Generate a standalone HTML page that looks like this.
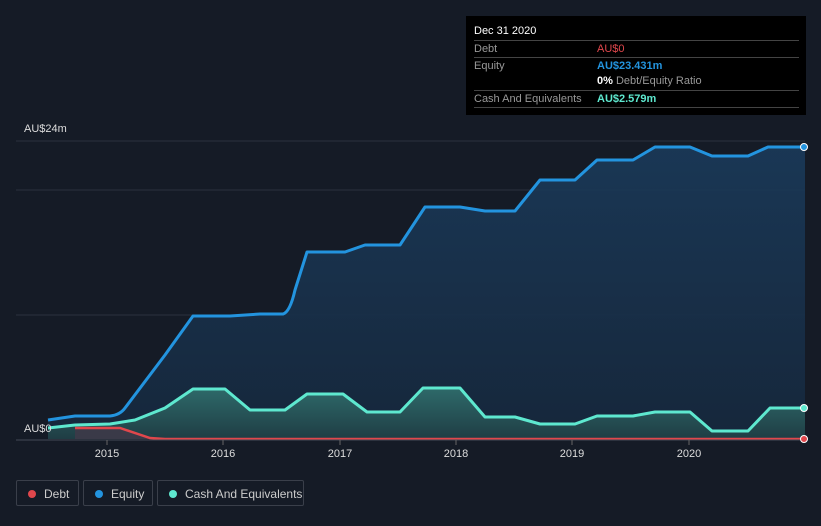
<!DOCTYPE html>
<html><head><meta charset="utf-8"><style>
body{margin:0;width:821px;height:526px;background:#151b26;font-family:"Liberation Sans",sans-serif;overflow:hidden;position:relative}
.tip{position:absolute;left:466px;top:16px;width:340px;height:99px;background:#000;font-size:11px;color:#999}
.tip .h{position:absolute;left:8px;top:9px;color:#fff;font-size:11px}
.row{position:absolute;left:8px;width:325px;border-top:1px solid #444;height:16px}
.row span{position:absolute;top:2px}
.lg{position:absolute;top:480px;height:26px;border:1px solid #3a3f4a;border-radius:2px;color:#ccc;font-size:12px;line-height:26px;box-sizing:border-box}
.lg i{position:absolute;left:11px;top:9px;width:8px;height:8px;border-radius:50%}
.lg b{font-weight:normal;position:absolute;left:27px}
</style></head><body>
<svg width="821" height="526" style="position:absolute;left:0;top:0">
<defs>
<linearGradient id="eq" x1="0" y1="0" x2="0" y2="1"><stop offset="0" stop-color="#1a3a5a" stop-opacity=".9"/><stop offset="1" stop-color="#16283d" stop-opacity=".9"/></linearGradient>
<linearGradient id="ca" x1="0" y1="0" x2="0" y2="1"><stop offset="0" stop-color="#2e6a6a"/><stop offset="1" stop-color="#1f3d44"/></linearGradient>
</defs>
<g stroke="#2a313d" stroke-width="1">
<line x1="16" y1="141" x2="805" y2="141"/><line x1="16" y1="190" x2="805" y2="190"/><line x1="16" y1="315" x2="805" y2="315"/>
</g>
<path d="M48,420 L75,416 L110,416 Q120,415 125,408 L165,355 L193,316 L230,316 L260,314 L283,314 Q290,312 295,290 L307,252 L345,252 L365,245 L400,245 L425,207 L460,207 L485,211 L515,211 L540,180 L575,180 L597,160 L633,160 L655,147 L690,147 L712,156 L748,156 L768,147 L805,147 L805,439 L48,439Z" fill="url(#eq)"/>
<path d="M48,428 L75,425 L110,424 L135,420 L165,408 L193,389 L225,389 L250,410 L285,410 L307,394 L343,394 L367,412 L400,412 L423,388 L460,388 L485,417 L515,417 L540,424 L575,424 L597,416 L633,416 L655,412 L690,412 L712,431 L748,431 L770,408 L805,408 L805,439 L48,439Z" fill="url(#ca)"/>
<path d="M75,428 L120,428 L150,438 L165,439 L75,439Z" fill="#3a3a48"/>
<path d="M48,420 L75,416 L110,416 Q120,415 125,408 L165,355 L193,316 L230,316 L260,314 L283,314 Q290,312 295,290 L307,252 L345,252 L365,245 L400,245 L425,207 L460,207 L485,211 L515,211 L540,180 L575,180 L597,160 L633,160 L655,147 L690,147 L712,156 L748,156 L768,147 L805,147" fill="none" stroke="#2394df" stroke-width="3" stroke-linejoin="round"/>
<path d="M48,428 L75,425 L110,424 L135,420 L165,408 L193,389 L225,389 L250,410 L285,410 L307,394 L343,394 L367,412 L400,412 L423,388 L460,388 L485,417 L515,417 L540,424 L575,424 L597,416 L633,416 L655,412 L690,412 L712,431 L748,431 L770,408 L805,408" fill="none" stroke="#5ee8cf" stroke-width="3" stroke-linejoin="round"/>
<path d="M75,428 L120,428 L150,438 L165,439 L805,439" fill="none" stroke="#e0474c" stroke-width="2.5"/>
<line x1="16" y1="440" x2="805" y2="440" stroke="#444a55"/>
<g stroke="#666" ><line x1="107" y1="440" x2="107" y2="445"/><line x1="223" y1="440" x2="223" y2="445"/><line x1="340" y1="440" x2="340" y2="445"/><line x1="456" y1="440" x2="456" y2="445"/><line x1="572" y1="440" x2="572" y2="445"/><line x1="689" y1="440" x2="689" y2="445"/></g>
<circle cx="804" cy="147" r="3.5" fill="#2394df" stroke="#fff" stroke-width="1"/>
<circle cx="804" cy="408" r="3.5" fill="#5ee8cf" stroke="#fff" stroke-width="1"/>
<circle cx="804" cy="439" r="3.5" fill="#e0474c" stroke="#fff" stroke-width="1"/>
<g fill="#ddd" font-size="11" font-family="Liberation Sans,sans-serif" text-anchor="middle">
<text x="107" y="457">2015</text><text x="223" y="457">2016</text><text x="340" y="457">2017</text><text x="456" y="457">2018</text><text x="572" y="457">2019</text><text x="689" y="457">2020</text>
<text x="24" y="132" text-anchor="start">AU$24m</text><text x="24" y="432" text-anchor="start">AU$0</text>
</g>
</svg>
<div class="tip">
<div class="h">Dec 31 2020</div>
<div class="row" style="top:24px"><span>Debt</span><span style="left:123px;color:#e0474c">AU$0</span></div>
<div class="row" style="top:41px;border:0;border-top:1px solid #444"><span>Equity</span><span style="left:123px;color:#2394df;font-weight:bold">AU$23.431m</span></div>
<div class="row" style="top:57px;border:0"><span style="left:123px"><b style="color:#fff">0%</b> Debt/Equity Ratio</span></div>
<div class="row" style="top:74px;border-bottom:1px solid #444"><span>Cash And Equivalents</span><span style="left:123px;color:#5ee8cf;font-weight:bold">AU$2.579m</span></div>
</div>
<div class="lg" style="left:16px;width:63px"><i style="background:#e0474c"></i><b>Debt</b></div>
<div class="lg" style="left:83px;width:70px"><i style="background:#2394df"></i><b>Equity</b></div>
<div class="lg" style="left:157px;width:147px"><i style="background:#5ee8cf"></i><b>Cash And Equivalents</b></div>
</body></html>
